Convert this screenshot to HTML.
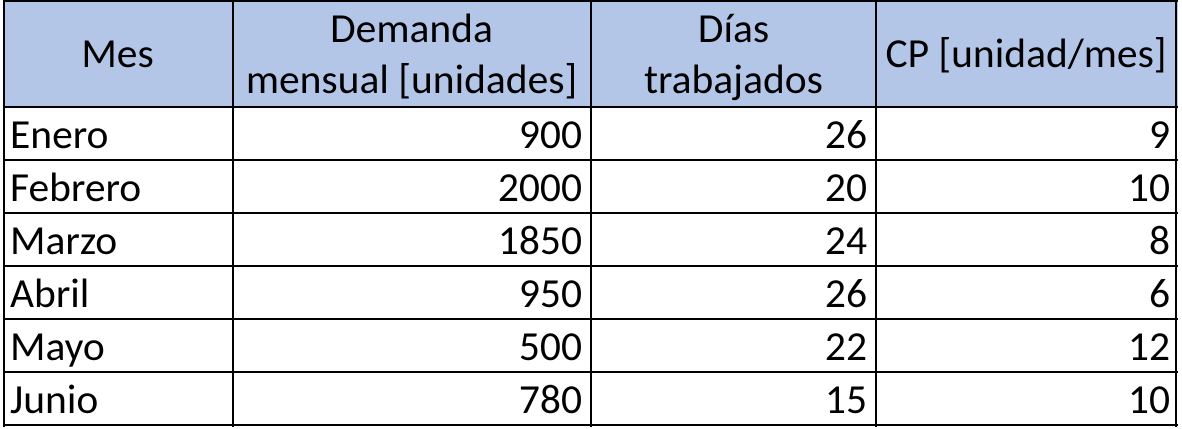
<!DOCTYPE html>
<html><head><meta charset="utf-8"><style>
body{margin:0;background:#fff;width:1182px;height:429px;overflow:hidden;position:relative;font-family:"Carlito","Liberation Sans",sans-serif;}
.c{position:absolute;box-sizing:border-box;font-size:41.5px;color:#000;line-height:53px;white-space:nowrap;}
.h{background:#b4c6e7;}
.v{position:absolute;background:#000;width:2px;top:0;height:427px;}
.r{position:absolute;background:#000;height:2px;left:3px;width:1175px;}
</style></head><body>
<div class="c h" style="left:3px;top:0;width:1175px;height:107px"></div>
<div class="c" style="left:3px;top:27px;width:229px;text-align:center">Mes</div>
<div class="c" style="left:232px;top:3px;width:359px;text-align:center;line-height:51px">Demanda<br>mensual [unidades]</div>
<div class="c" style="left:591px;top:3px;width:285px;text-align:center;line-height:51px">Días<br>trabajados</div>
<div class="c" style="left:876px;top:27px;width:300px;text-align:center">CP [unidad/mes]</div>
<div class="v" style="left:3px"></div><div class="v" style="left:232px"></div><div class="v" style="left:590px"></div><div class="v" style="left:875px"></div><div class="v" style="left:1175px"></div>
<div class="r" style="top:0"></div>
<div class="r" style="top:106px"></div><div class="r" style="top:159px"></div><div class="r" style="top:212px"></div><div class="r" style="top:265px"></div><div class="r" style="top:318px"></div><div class="r" style="top:371px"></div><div class="r" style="top:424px"></div>
<div class="c" style="left:10px;top:108px">Enero</div><div class="c" style="left:232px;top:108px;width:350px;text-align:right">900</div><div class="c" style="left:591px;top:108px;width:276px;text-align:right">26</div><div class="c" style="left:876px;top:108px;width:294px;text-align:right">9</div>
<div class="c" style="left:10px;top:161px">Febrero</div><div class="c" style="left:232px;top:161px;width:350px;text-align:right">2000</div><div class="c" style="left:591px;top:161px;width:276px;text-align:right">20</div><div class="c" style="left:876px;top:161px;width:294px;text-align:right">10</div>
<div class="c" style="left:10px;top:214px">Marzo</div><div class="c" style="left:232px;top:214px;width:350px;text-align:right">1850</div><div class="c" style="left:591px;top:214px;width:276px;text-align:right">24</div><div class="c" style="left:876px;top:214px;width:294px;text-align:right">8</div>
<div class="c" style="left:10px;top:267px">Abril</div><div class="c" style="left:232px;top:267px;width:350px;text-align:right">950</div><div class="c" style="left:591px;top:267px;width:276px;text-align:right">26</div><div class="c" style="left:876px;top:267px;width:294px;text-align:right">6</div>
<div class="c" style="left:10px;top:320px">Mayo</div><div class="c" style="left:232px;top:320px;width:350px;text-align:right">500</div><div class="c" style="left:591px;top:320px;width:276px;text-align:right">22</div><div class="c" style="left:876px;top:320px;width:294px;text-align:right">12</div>
<div class="c" style="left:10px;top:373px">Junio</div><div class="c" style="left:232px;top:373px;width:350px;text-align:right">780</div><div class="c" style="left:591px;top:373px;width:276px;text-align:right">15</div><div class="c" style="left:876px;top:373px;width:294px;text-align:right">10</div>
</body></html>
